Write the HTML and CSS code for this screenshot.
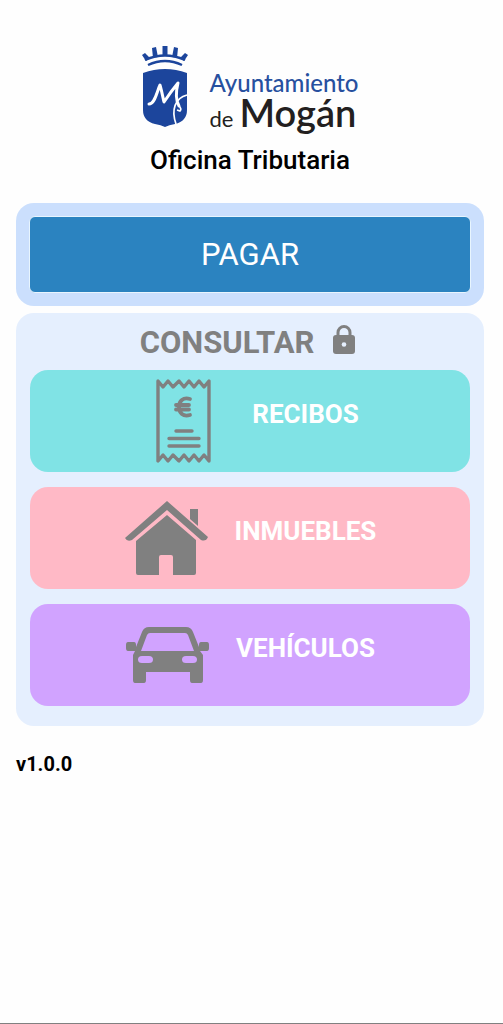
FILE: index.html
```html
<!DOCTYPE html>
<html lang="es">
<head>
<meta charset="utf-8">
<meta name="viewport" content="width=device-width, initial-scale=1">
<title>Oficina Tributaria</title>
<link rel="stylesheet" href="styles.css">
</head>
<body>
<main class="app">
  <header class="header">
    <div class="brand">
      <svg class="crest" viewBox="0 0 48 84" aria-hidden="true">
        <g fill="#1c459c">
          <path d="M2 29Q24 21 46 29V66Q46 77 34 80Q28 81 24 83Q20 81 14 80Q2 77 2 66Z"/>
          <path d="M21.500 2H26.500V12H21.500ZM11 4L15 3L17 13L12 14ZM37 4L33 3L31 13L36 14ZM1 11L4 9L9 14L5 17ZM47 11L44 9L39 14L43 17Z"/>
        </g>
        <path d="M4 16Q24 7 44 16M7 21Q24 13 41 21" fill="none" stroke="#1c459c" stroke-width="2.400"/>
        <path d="M8 60C14 60 16 47 19 41C21 48 22 54 23 58C27 52 32 45 37 39C35 47 34 55 38 62" fill="none" stroke="#fff" stroke-width="3" stroke-linecap="round" stroke-linejoin="round"/>
        <path d="M46 51C34 54 30 66 35 80M38 62Q41 65 39 67L36 66" fill="none" stroke="#fff" stroke-width="1.700"/>
      </svg>
      <div class="brand-name">
        <span class="brand-top">Ayuntamiento</span>
        <span class="brand-bottom"><span class="brand-de">de</span> <span class="brand-town">Mogán</span></span>
      </div>
    </div>
    <h1 class="title">Oficina Tributaria</h1>
  </header>

  <section class="pay-panel">
    <button class="pay" type="button">PAGAR</button>
  </section>

  <section class="panel">
    <h2 class="panel-title">CONSULTAR
      <svg class="lock" viewBox="0 0 24 30" aria-hidden="true">
        <path d="M6 11V7.500a6 6 0 0 1 12 0V11" fill="none" stroke="#808080" stroke-width="3"/>
        <rect x="1" y="10" width="22" height="19" rx="3" fill="#808080"/>
        <circle cx="12" cy="19.500" r="2.300" fill="#e5effe"/>
      </svg>
    </h2>
    <button class="item receipts" type="button">
      <svg class="icon" viewBox="0 0 85 85" aria-hidden="true">
        <g fill="none" stroke="#808080" stroke-width="3.400" stroke-linecap="round" stroke-linejoin="round">
          <path d="M17 2L22 8L27 2L32 8L38 2L43 8L48 2L53 8L58 2L63 8L68 2V82L63 76L58 82L53 76L48 82L43 76L38 82L32 76L27 82L22 76L17 82Z"/>
          <path d="M35 52H51M28 59.500H58M28 67H58" />
          <path d="M49 20C42 18 38 22 38 28S42 38 49 36M35 26H48M35 30.500H48" stroke-width="3.800"/>
        </g>
      </svg>
      <span class="label">RECIBOS</span>
    </button>
    <button class="item homes" type="button">
      <svg class="icon" viewBox="0 0 85 85" aria-hidden="true">
        <g fill="#808080">
          <path d="M43 5L84 41Q82 46 77 44L43 14L8 44Q3 46 1 42Z"/>
          <path d="M66 13H74V30L66 23Z"/>
          <path d="M43 19L72 44V77Q72 79 70 79H49V61Q49 59 47 59H37Q35 59 35 61V79H14Q12 79 12 77V45Z"/>
        </g>
      </svg>
      <span class="label">INMUEBLES</span>
    </button>
    <button class="item cars" type="button">
      <svg class="icon" viewBox="0 0 85 85" aria-hidden="true">
        <path fill="#808080" fill-rule="evenodd" d="M24 14H61Q66 14 68 19L74 34V32Q74 29 76 29H82Q84 29 84 32V35Q84 38 82 38H75L78 42V67Q78 70 76 70H67Q65 70 65 67V59H21V67Q21 70 19 70H10Q8 70 8 67V42L10 38H3Q1 38 1 35V32Q1 29 3 29H9Q11 29 11 32V34L17 19Q19 14 24 14ZM25 20Q23 20 22 22L16 38H69L63 22Q62 20 60 20ZM17 43Q13 43 13 46.500T17 50H24Q28 50 28 46.500T24 43ZM61 43Q57 43 57 46.500T61 50H68Q72 50 72 46.500T68 43Z"/>
      </svg>
      <span class="label">VEHÍCULOS</span>
    </button>
  </section>

  <footer class="version">v1.0.0</footer>
</main>
</body>
</html>
```
FILE: styles.css
```css
* {
  box-sizing: border-box;
}

body {
  margin: 0;
  background: #fefefe;
  color: #000;
  font-family: Roboto, "Liberation Sans", sans-serif;
}

.app {
  display: flex;
  flex-direction: column;
  min-height: 100vh;
  padding: 44px 19px 0 16px;
  border-bottom: 1px solid #808080;
}

.header {
  display: flex;
  flex-direction: column;
  align-items: center;
  margin-bottom: 26px;
}

.brand {
  display: flex;
  align-items: flex-start;
  gap: 20px;
}

.crest {
  width: 48px;
  height: 84px;
}

.brand-name {
  display: flex;
  flex-direction: column;
  padding-top: 26px;
  font-family: Lato, sans-serif;
}

.brand-top {
  color: #27509f;
  font-size: 24px;
  font-weight: 500;
  line-height: 26px;
}

.brand-bottom {
  display: flex;
  align-items: baseline;
  gap: 6px;
  color: #231f20;
  line-height: 32px;
}

.brand-de {
  font-size: 22px;
}

.brand-town {
  font-size: 38px;
  font-weight: 600;
}

.title {
  margin: 8px 0 0;
  font-size: 26px;
  font-weight: 500;
  line-height: 34px;
}

.pay-panel {
  display: flex;
  margin-bottom: 7px;
  padding: 13px;
  border-radius: 18px;
  background: #cbdffd;
}

.pay {
  flex: 1;
  height: 77px;
  padding: 0;
  border: 1px solid #e8f5fe;
  border-radius: 6px;
  background: #2b83c0;
  color: #fff;
  font: 400 31px Roboto, sans-serif;
}

.panel {
  display: flex;
  flex-direction: column;
  gap: 15px;
  padding: 12px 14px 20px;
  border-radius: 18px;
  background: #e5effe;
}

.panel-title {
  display: flex;
  justify-content: center;
  align-items: center;
  gap: 18px;
  margin: 0 4px -6px 0;
  color: #808080;
  font-size: 31px;
  font-weight: 700;
  line-height: 36px;
}

.lock {
  width: 24px;
  height: 30px;
  margin-bottom: 6px;
}

.item {
  display: flex;
  justify-content: center;
  align-items: center;
  gap: 26px;
  height: 102px;
  padding: 0;
  border: 0;
  border-radius: 18px;
  color: #fff;
  font: 700 26px Roboto, sans-serif;
}

.icon {
  width: 85px;
  height: 85px;
}

.label {
  padding-bottom: 14px;
}

.receipts {
  background: #80e3e5;
}

.homes {
  background: #ffb9c6;
}

.cars {
  background: #d1a3ff;
}

.version {
  padding: 26px 0;
  font-size: 20px;
  font-weight: 700;
  line-height: 24px;
}
```
